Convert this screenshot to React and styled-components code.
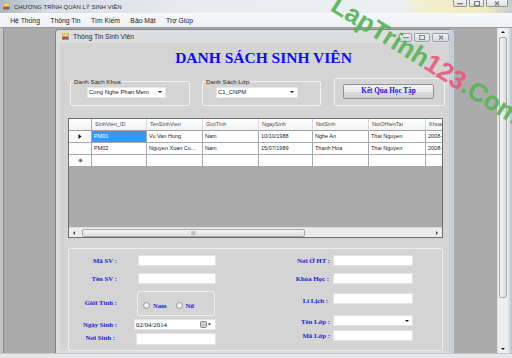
import React from "react";
import styled, { createGlobalStyle } from "styled-components";

const GlobalStyle = createGlobalStyle`
  html, body { margin: 0; padding: 0; background: #ababab; }
  body { font-family: "Liberation Sans", Arial, sans-serif; }
  * { box-sizing: border-box; }
`;

const Screen = styled.div`
  position: relative;
  width: 512px;
  height: 358px;
  overflow: hidden;
  display: flex;
  flex-direction: column;
  background: #ababab;
`;

const TitleBar = styled.div`
  height: 13px;
  display: flex;
  align-items: center;
  gap: 4px;
  padding-left: 3px;
  background: linear-gradient(90deg, #aeb8c2 0%, #d9dfe6 10%, #e8ecf0 40%, #eceff2 78%, #f3eecb 83%, #f1ebbf 95%, #c7cbd0 100%);
  font-size: 6px;
  color: #1e1e1e;
`;

const WinButtons = styled.div`
  margin-left: auto;
  align-self: flex-start;
  display: flex;
  gap: 2px;
  padding-right: 4px;
`;

const WinButton = styled.div`
  width: ${(p) => p.$w}px;
  height: ${(p) => p.$h}px;
  border: 1px solid #8d949c;
  border-top: none;
  border-radius: 0 0 2px 2px;
  background: linear-gradient(#f3f4f6, #dcdfe3);
  display: flex;
  align-items: center;
  justify-content: center;
`;

const MenuBar = styled.div`
  height: 15px;
  display: flex;
  align-items: center;
  padding-left: 5px;
  background: linear-gradient(#f7f8fa, #eef0f3);
  border-bottom: 1px solid #9a9a9a;
  font-size: 6.8px;
  color: #1a1a1a;
`;

const MenuItem = styled.span`
  padding: 0 5.2px;
`;

const Workspace = styled.div`
  display: flex;
  height: 325px;
`;

const MdiArea = styled.div`
  flex: 1;
  background: #ababab;
  border-left: 3px solid #c4c6c9;
  box-shadow: inset 1px 0 0 #8e8e8e;
  padding: 1px 0 0 52px;
`;

const ChildWindow = styled.div`
  width: 399px;
  height: 326px;
  background: #dcdddf;
  border: 1px solid #7f848a;
  border-right: 5px solid #c3cfde;
  border-radius: 4px 4px 0 0;
  display: flex;
  flex-direction: column;
  padding: 0 0 0 4px;
`;

const ChildTitle = styled.div`
  height: 13px;
  display: flex;
  align-items: center;
  gap: 4px;
  padding-left: 2px;
  font-size: 6.8px;
  color: #2a2a2a;
`;

const ChildButtons = styled.div`
  margin-left: auto;
  display: flex;
  gap: 2px;
  padding-top: 3px;
  align-self: flex-start;
`;

const ChildButton = styled.div`
  width: ${(p) => p.$w}px;
  height: 9px;
  border: 1px solid #9aa0a8;
  border-radius: 2px;
  background: linear-gradient(#f0f1f3, #d6d9dd);
  display: flex;
  align-items: center;
  justify-content: center;
`;

const Client = styled.div`
  width: 389px;
  height: 308px;
  background: #d4d4d4;
  display: flex;
  flex-direction: column;
`;

const Heading = styled.h1`
  margin: 0;
  height: 35px;
  padding: 6px 0 0 18px;
  text-align: center;
  font-family: "Liberation Serif", "Times New Roman", serif;
  font-weight: 700;
  font-size: 15.5px;
  color: #0a0aff;
`;

const TopRow = styled.div`
  display: flex;
  align-items: flex-start;
  padding-left: 10px;
  height: 30px;
`;

const Group = styled.fieldset`
  margin: 0 0 0 ${(p) => p.$gap || 0}px;
  padding: 0;
  min-width: 0;
  width: ${(p) => p.$w}px;
  height: ${(p) => p.$h}px;
  border: 1px solid #f2f2f2;
  border-radius: 2px;
`;

const Legend = styled.legend`
  padding: 0 1px;
  margin-left: 2px;
  font-size: 6.2px;
  line-height: 7px;
  color: #2f2f2f;
`;

const Combo = styled.div`
  margin: ${(p) => p.$mt || 0}px 0 0 ${(p) => p.$ml || 0}px;
  width: ${(p) => p.$w}px;
  height: ${(p) => p.$h || 11}px;
  background: #fff;
  border: 1px solid #e6e6e6;
  display: flex;
  align-items: center;
  padding: 0 3px 0 1px;
  font-size: 5.9px;
  color: #222;
`;

const Arrow = styled.span`
  margin-left: auto;
  width: 0;
  height: 0;
  border-left: 2px solid transparent;
  border-right: 2px solid transparent;
  border-top: 2px solid #111;
`;

const ActionButton = styled.button`
  margin: 5px 0 0 8px;
  width: 91px;
  height: 15px;
  padding: 0;
  border: 1px solid #8e8f8f;
  border-radius: 2px;
  background: linear-gradient(#f2f2f2 0%, #ebebeb 50%, #dddddd 51%, #cfcfcf 100%);
  font-family: "Liberation Serif", "Times New Roman", serif;
  font-weight: 700;
  font-size: 7.2px;
  color: #0c0cf0;
`;

const GridBox = styled.div`
  margin: 10px 0 0 8px;
  width: 375px;
  height: 121px;
  border: 1px solid #6c6c6c;
  background: #ababab;
  display: flex;
  flex-direction: column;
  overflow: hidden;
`;

const GridRow = styled.div`
  display: grid;
  grid-template-columns: 23px 55px 56px 56px 54px 56px 57px 40px;
  height: 12px;
`;

const Cell = styled.div`
  height: 12px;
  padding-left: ${(p) => (p.$head ? 3 : 2)}px;
  border-right: 1px solid ${(p) => (p.$head ? "#d9d9d9" : "#a9a9a9")};
  border-bottom: 1px solid ${(p) => (p.$head ? "#a0a0a0" : "#a9a9a9")};
  background: ${(p) => (p.$sel ? "#3399ff" : p.$head ? "linear-gradient(#ffffff, #f1f2f4)" : "#ffffff")};
  color: ${(p) => (p.$sel ? "#fff" : p.$head ? "#4a4a4a" : "#222")};
  font-size: 5.5px;
  line-height: 11px;
  white-space: nowrap;
  overflow: hidden;
`;

const RowHead = styled(Cell)`
  display: flex;
  align-items: center;
  justify-content: center;
  padding: 0;
  background: ${(p) => (p.$corner ? "linear-gradient(#ffffff, #f1f2f4)" : "#fbfbfb")};
  border-right-color: #a9a9a9;
`;

const GridFill = styled.div`
  flex: 1;
`;

const HScroll = styled.div`
  height: 10px;
  background: #ececec;
  border-top: 1px solid #dcdcdc;
  display: flex;
  align-items: center;
  padding: 0 3px;
`;

const ScrollThumb = styled.div`
  margin-left: 6px;
  width: 223px;
  height: 8px;
  border: 1px solid #a7a7a7;
  border-radius: 2px;
  background: linear-gradient(#f4f4f4, #dedede);
  display: flex;
  align-items: center;
  justify-content: center;
`;

const EndArrow = styled.span`
  margin-${(p) => (p.$vertical ? "top" : "left")}: auto;
  display: flex;
`;

const FormGroup = styled.div`
  margin: 10px 0 0 8px;
  width: 375px;
  height: 103px;
  border: 1px solid #eeeeee;
  border-radius: 2px;
  display: flex;
`;

const FormColumn = styled.div`
  display: flex;
  flex-direction: column;
  padding-top: 6px;
  width: ${(p) => p.$w}px;
`;

const Field = styled.div`
  display: flex;
  align-items: center;
  margin-top: ${(p) => p.$gap || 0}px;
`;

const Label = styled.label`
  width: ${(p) => p.$w}px;
  text-align: right;
  font-family: "Liberation Serif", "Times New Roman", serif;
  font-weight: 700;
  font-size: 6.8px;
  color: #2222d6;
  margin-top: ${(p) => p.$dy || 0}px;
`;

const TextBox = styled.div`
  margin-left: ${(p) => p.$ml}px;
  width: ${(p) => p.$w}px;
  height: ${(p) => p.$h || 11}px;
  background: #fff;
  border: 1px solid #e3e3e3;
  display: flex;
  align-items: center;
  padding: 0 3px 0 1px;
`;

const GenderBox = styled.div`
  margin-left: 20px;
  width: 78px;
  height: 25px;
  border: 1px solid #eeeeee;
  border-radius: 2px;
  display: flex;
  align-items: center;
  padding: 3px 0 0 5px;
  gap: 9px;
`;

const Radio = styled.span`
  display: flex;
  align-items: center;
  gap: 3px;
  font-family: "Liberation Serif", "Times New Roman", serif;
  font-weight: 700;
  font-size: 6.6px;
  color: #2222d6;
  &::before {
    content: "";
    width: 5px;
    height: 5px;
    border-radius: 50%;
    border: 1px solid #9a9a9a;
    background: radial-gradient(#ffffff, #dcdcdc);
  }
`;

const DateText = styled.span`
  font-family: "Liberation Serif", "Times New Roman", serif;
  font-size: 6.8px;
  color: #111;
`;

const VScroll = styled.div`
  width: 11px;
  background: #eeeeee;
  border-left: 1px solid #dedede;
  display: flex;
  flex-direction: column;
  align-items: center;
  padding: 2px 0 2px;
`;

const VThumb = styled.div`
  width: 8px;
  height: 261px;
  margin-top: 3px;
  border: 1px solid #a9a9a9;
  border-radius: 2px;
  background: linear-gradient(90deg, #f3f3f3, #dcdcdc);
`;

const RightFrame = styled.div`
  width: 4px;
  background: linear-gradient(90deg, #e2e6ea, #b8c3cf);
`;

const BottomStrip = styled.div`
  height: 5px;
  background: #e4e6e8;
  border-top: 1px solid #c9c9c9;
`;

const Watermark = styled.div`
  position: absolute;
  left: 341px;
  top: -9px;
  transform: rotate(32deg);
  transform-origin: 0 0;
  font-family: "Liberation Sans", Arial, sans-serif;
  font-weight: 700;
  font-size: 26px;
  line-height: 26px;
  white-space: nowrap;
  color: #55b552;
  opacity: 0.9;
  pointer-events: none;
`;

const Pink = styled.span`
  color: #e8587c;
`;

const AppIcon = () => (
  <svg width="7" height="7" viewBox="0 0 7 7">
    <rect x="0" y="0" width="7" height="7" fill="#f3d36b" stroke="#b88a2a" strokeWidth="0.6" />
    <rect x="0.5" y="3.5" width="3" height="3" fill="#d9322b" />
    <rect x="3.5" y="3.5" width="3" height="3" fill="#3a6fd0" />
  </svg>
);

const Tri = ({ dir = "down" }) => (
  <svg width="4" height="4" viewBox="0 0 4 4">
    {dir === "down" && <path d="M0 1h4L2 3z" fill="#111" />}
    {dir === "up" && <path d="M0 3h4L2 1z" fill="#111" />}
    {dir === "left" && <path d="M3 0v4L1 2z" fill="#444" />}
    {dir === "right" && <path d="M1 0v4L3 2z" fill="#444" />}
  </svg>
);

const MinGlyph = ({ c }) => (
  <svg width="6" height="3"><rect x="0" y="1" width="6" height="1.3" fill={c} /></svg>
);
const MaxGlyph = ({ c }) => (
  <svg width="6" height="5"><rect x="0.5" y="0.5" width="5" height="4" fill="none" stroke={c} /></svg>
);
const CloseGlyph = ({ c }) => (
  <svg width="6" height="5"><path d="M1 0.5l4 4M5 0.5l-4 4" stroke={c} strokeWidth="1.2" /></svg>
);

const columns = ["SinhVien_ID", "TenSinhVien", "GioiTinh", "NgaySinh", "NoiSinh", "NoiOHienTai", "Khoa"];
const rows = [
  ["PM01", "Vu Van Hung", "Nam", "10/10/1988", "Nghe An", "Thai Nguyen", "2008-2012"],
  ["PM02", "Nguyen Xuan Cu...", "Nam", "15/07/1989", "Thanh Hoa", "Thai Nguyen", "2008-2012"],
];

function App() {
  return (
    <Screen>
      <GlobalStyle />
      <TitleBar>
        <AppIcon />
        <span>CHƯƠNG TRÌNH QUẢN LÝ SINH VIÊN</span>
        <WinButtons>
          <WinButton $w={14} $h={7}><MinGlyph c="#777" /></WinButton>
          <WinButton $w={15} $h={7}><MaxGlyph c="#777" /></WinButton>
          <WinButton $w={22} $h={7}><CloseGlyph c="#777" /></WinButton>
        </WinButtons>
      </TitleBar>
      <MenuBar>
        <MenuItem>Hệ Thống</MenuItem>
        <MenuItem>Thông Tin</MenuItem>
        <MenuItem>Tìm Kiếm</MenuItem>
        <MenuItem>Bảo Mật</MenuItem>
        <MenuItem>Trợ Giúp</MenuItem>
      </MenuBar>
      <Workspace>
        <MdiArea>
          <ChildWindow>
            <ChildTitle>
              <AppIcon />
              <span>Thông Tin Sinh Viên</span>
              <ChildButtons>
                <ChildButton $w={13}><MinGlyph c="#888" /></ChildButton>
                <ChildButton $w={16}><MaxGlyph c="#888" /></ChildButton>
                <ChildButton $w={17}><CloseGlyph c="#888" /></ChildButton>
              </ChildButtons>
            </ChildTitle>
            <Client>
              <Heading>DANH SÁCH SINH VIÊN</Heading>
              <TopRow>
                <Group $w={120} $h={28}>
                  <Legend>Danh Sách Khoa</Legend>
                  <Combo $w={79} $ml={16} $mt={2}>
                    <span>Cong Nghe Phan Mem</span>
                    <Arrow />
                  </Combo>
                </Group>
                <Group $w={119} $h={28} $gap={12}>
                  <Legend>Danh Sách Lớp</Legend>
                  <Combo $w={82} $ml={13} $mt={2}>
                    <span>C1_CNPM</span>
                    <Arrow />
                  </Combo>
                </Group>
                <Group $w={111} $h={28} $gap={13}>
                  <ActionButton>Kết Qủa Học Tập</ActionButton>
                </Group>
              </TopRow>
              <GridBox>
                <GridRow>
                  <RowHead $head $corner />
                  {columns.map((c) => (
                    <Cell key={c} $head>{c}</Cell>
                  ))}
                </GridRow>
                {rows.map((r, i) => (
                  <GridRow key={r[0]}>
                    <RowHead>{i === 0 && <svg width="4" height="5"><path d="M0.5 0v5l3-2.5z" fill="#111" /></svg>}</RowHead>
                    {r.map((v, j) => (
                      <Cell key={j} $sel={i === 0 && j === 0}>{v}</Cell>
                    ))}
                  </GridRow>
                ))}
                <GridRow>
                  <RowHead>
                    <svg width="5" height="5"><path d="M2.5 0.5v4M0.5 2.5h4M1 1l3 3M4 1l-3 3" stroke="#444" strokeWidth="0.6" /></svg>
                  </RowHead>
                  {columns.map((c) => (
                    <Cell key={c} />
                  ))}
                </GridRow>
                <GridFill />
                <HScroll>
                  <Tri dir="left" />
                  <ScrollThumb>
                    <svg width="5" height="4"><path d="M1 0v4M2.5 0v4M4 0v4" stroke="#8a8a8a" strokeWidth="0.6" /></svg>
                  </ScrollThumb>
                  <EndArrow><Tri dir="right" /></EndArrow>
                </HScroll>
              </GridBox>
              <FormGroup>
                <FormColumn $w={210}>
                  <Field>
                    <Label $w={48}>Mã SV :</Label>
                    <TextBox $ml={21} $w={78} />
                  </Field>
                  <Field $gap={7}>
                    <Label $w={48}>Tên SV :</Label>
                    <TextBox $ml={21} $w={78} />
                  </Field>
                  <Field $gap={7}>
                    <Label $w={48} $dy={-3}>Giới Tính :</Label>
                    <GenderBox>
                      <Radio>Nam</Radio>
                      <Radio>Nữ</Radio>
                    </GenderBox>
                  </Field>
                  <Field $gap={3}>
                    <Label $w={48}>Ngày Sinh :</Label>
                    <TextBox $ml={17} $w={82}>
                      <DateText>02/04/2014</DateText>
                      <svg style={{ marginLeft: "auto" }} width="12" height="7" viewBox="0 0 12 7">
                        <rect x="0.5" y="0.5" width="6" height="6" rx="1" fill="#c9c9c9" stroke="#8a8a8a" />
                        <path d="M8 2.5h3L9.5 4.5z" fill="#222" />
                      </svg>
                    </TextBox>
                  </Field>
                  <Field $gap={3}>
                    <Label $w={46} $dy={-3}>Nơi Sinh :</Label>
                    <TextBox $ml={21} $w={80} $h={12} />
                  </Field>
                </FormColumn>
                <FormColumn $w={160}>
                  <Field>
                    <Label $w={51}>Nơi Ở HT :</Label>
                    <TextBox $ml={3} $w={80} />
                  </Field>
                  <Field $gap={7}>
                    <Label $w={50}>Khóa Học :</Label>
                    <TextBox $ml={4} $w={80} />
                  </Field>
                  <Field $gap={9}>
                    <Label $w={49} $dy={3}>Lí Lịch :</Label>
                    <TextBox $ml={5} $w={80} />
                  </Field>
                  <Field $gap={11}>
                    <Label $w={51} $dy={2}>Tên Lớp :</Label>
                    <TextBox $ml={3} $w={80}>
                      <Arrow />
                    </TextBox>
                  </Field>
                  <Field $gap={4}>
                    <Label $w={51}>Mã Lớp :</Label>
                    <TextBox $ml={3} $w={80} />
                  </Field>
                </FormColumn>
              </FormGroup>
            </Client>
          </ChildWindow>
        </MdiArea>
        <VScroll>
          <Tri dir="up" />
          <VThumb />
          <EndArrow $vertical><Tri dir="down" /></EndArrow>
        </VScroll>
        <RightFrame />
      </Workspace>
      <BottomStrip />
      <Watermark>
        LapTrinh<Pink>123</Pink>.Com
      </Watermark>
    </Screen>
  );
}

export default App;
